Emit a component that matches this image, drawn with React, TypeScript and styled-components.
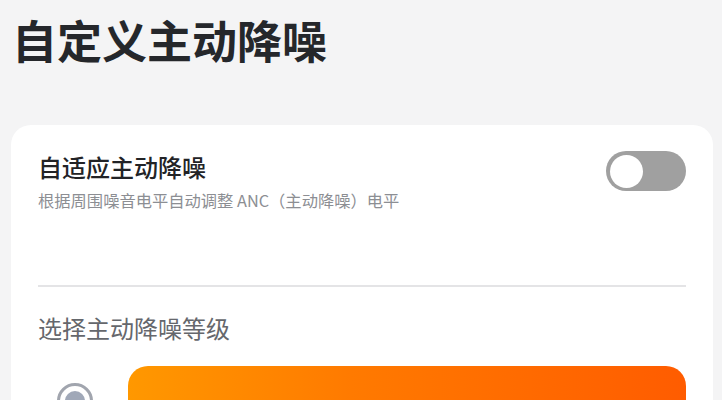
import { FunctionComponent } from 'react';
import styled, { createGlobalStyle } from 'styled-components';

const GlobalStyle = createGlobalStyle`
    html, body {
        margin: 0;
        padding: 0;
        background: #f4f4f5;
        font-family: 'Noto Sans CJK SC', 'Noto Sans', sans-serif;
        overflow: hidden;
    }
`;

const Page = styled.div`
    width: 722px;
    height: 400px;
    padding: 0 9px 0 11px;
    box-sizing: border-box;
    overflow: hidden;
`;

const PageTitle = styled.h1`
    font-size: 45px;
    font-weight: 700;
    line-height: 60px;
    color: #25272b;
    margin: 10px 0 55px 1px;
`;

const Card = styled.div`
    background: #ffffff;
    border-radius: 20px;
    padding: 22px 27px 0 27px;
`;

const SettingRow = styled.div`
    display: flex;
    flex-direction: row;
    align-items: flex-start;
    justify-content: space-between;
`;

const SettingText = styled.div`
    display: flex;
    flex-direction: column;
`;

const SettingTitle = styled.div`
    font-size: 24px;
    font-weight: 500;
    line-height: 40px;
    color: #222326;
`;

const SettingDesc = styled.div`
    font-size: 16.3px;
    line-height: 26px;
    color: #8c8e93;
`;

const Toggle = styled.div<{ $on?: boolean }>`
    width: 80px;
    height: 40px;
    border-radius: 20px;
    background: ${({ $on }) => ($on ? '#ff7a00' : '#a0a0a0')};
    display: flex;
    align-items: center;
    justify-content: ${({ $on }) => ($on ? 'flex-end' : 'flex-start')};
    padding: 0 4px;
    box-sizing: border-box;
    margin-top: 4px;
`;

const Knob = styled.div`
    width: 33px;
    height: 33px;
    border-radius: 50%;
    background: #ffffff;
`;

const Divider = styled.div`
    height: 2px;
    background: #e4e4e6;
    margin-top: 72px;
`;

const SectionLabel = styled.div`
    font-size: 24px;
    line-height: 40px;
    color: #65676c;
    margin-top: 21px;
`;

const LevelRow = styled.div`
    display: flex;
    flex-direction: row;
    align-items: flex-start;
    gap: 35px;
    margin-top: 18px;
`;

const Radio = styled.div`
    width: 36px;
    height: 36px;
    border-radius: 50%;
    border: 3px solid #a1a5ae;
    box-sizing: border-box;
    display: flex;
    align-items: center;
    justify-content: center;
    margin: 17px 0 0 19px;
    flex-shrink: 0;
`;

const RadioDot = styled.div`
    width: 20px;
    height: 20px;
    border-radius: 50%;
    background: #a0a8b8;
`;

const LevelCard = styled.div`
    flex: 1;
    height: 120px;
    border-radius: 20px;
    background: linear-gradient(90deg, #ff9800 0%, #ff7a00 40%, #ff5c00 100%);
`;

const App: FunctionComponent = () => {
    return (
        <>
            <GlobalStyle />
            <Page>
                <PageTitle>自定义主动降噪</PageTitle>
                <Card>
                    <SettingRow>
                        <SettingText>
                            <SettingTitle>自适应主动降噪</SettingTitle>
                            <SettingDesc>根据周围噪音电平自动调整 ANC（主动降噪）电平</SettingDesc>
                        </SettingText>
                        <Toggle>
                            <Knob />
                        </Toggle>
                    </SettingRow>
                    <Divider />
                    <SectionLabel>选择主动降噪等级</SectionLabel>
                    <LevelRow>
                        <Radio>
                            <RadioDot />
                        </Radio>
                        <LevelCard />
                    </LevelRow>
                </Card>
            </Page>
        </>
    );
};

export default App;
